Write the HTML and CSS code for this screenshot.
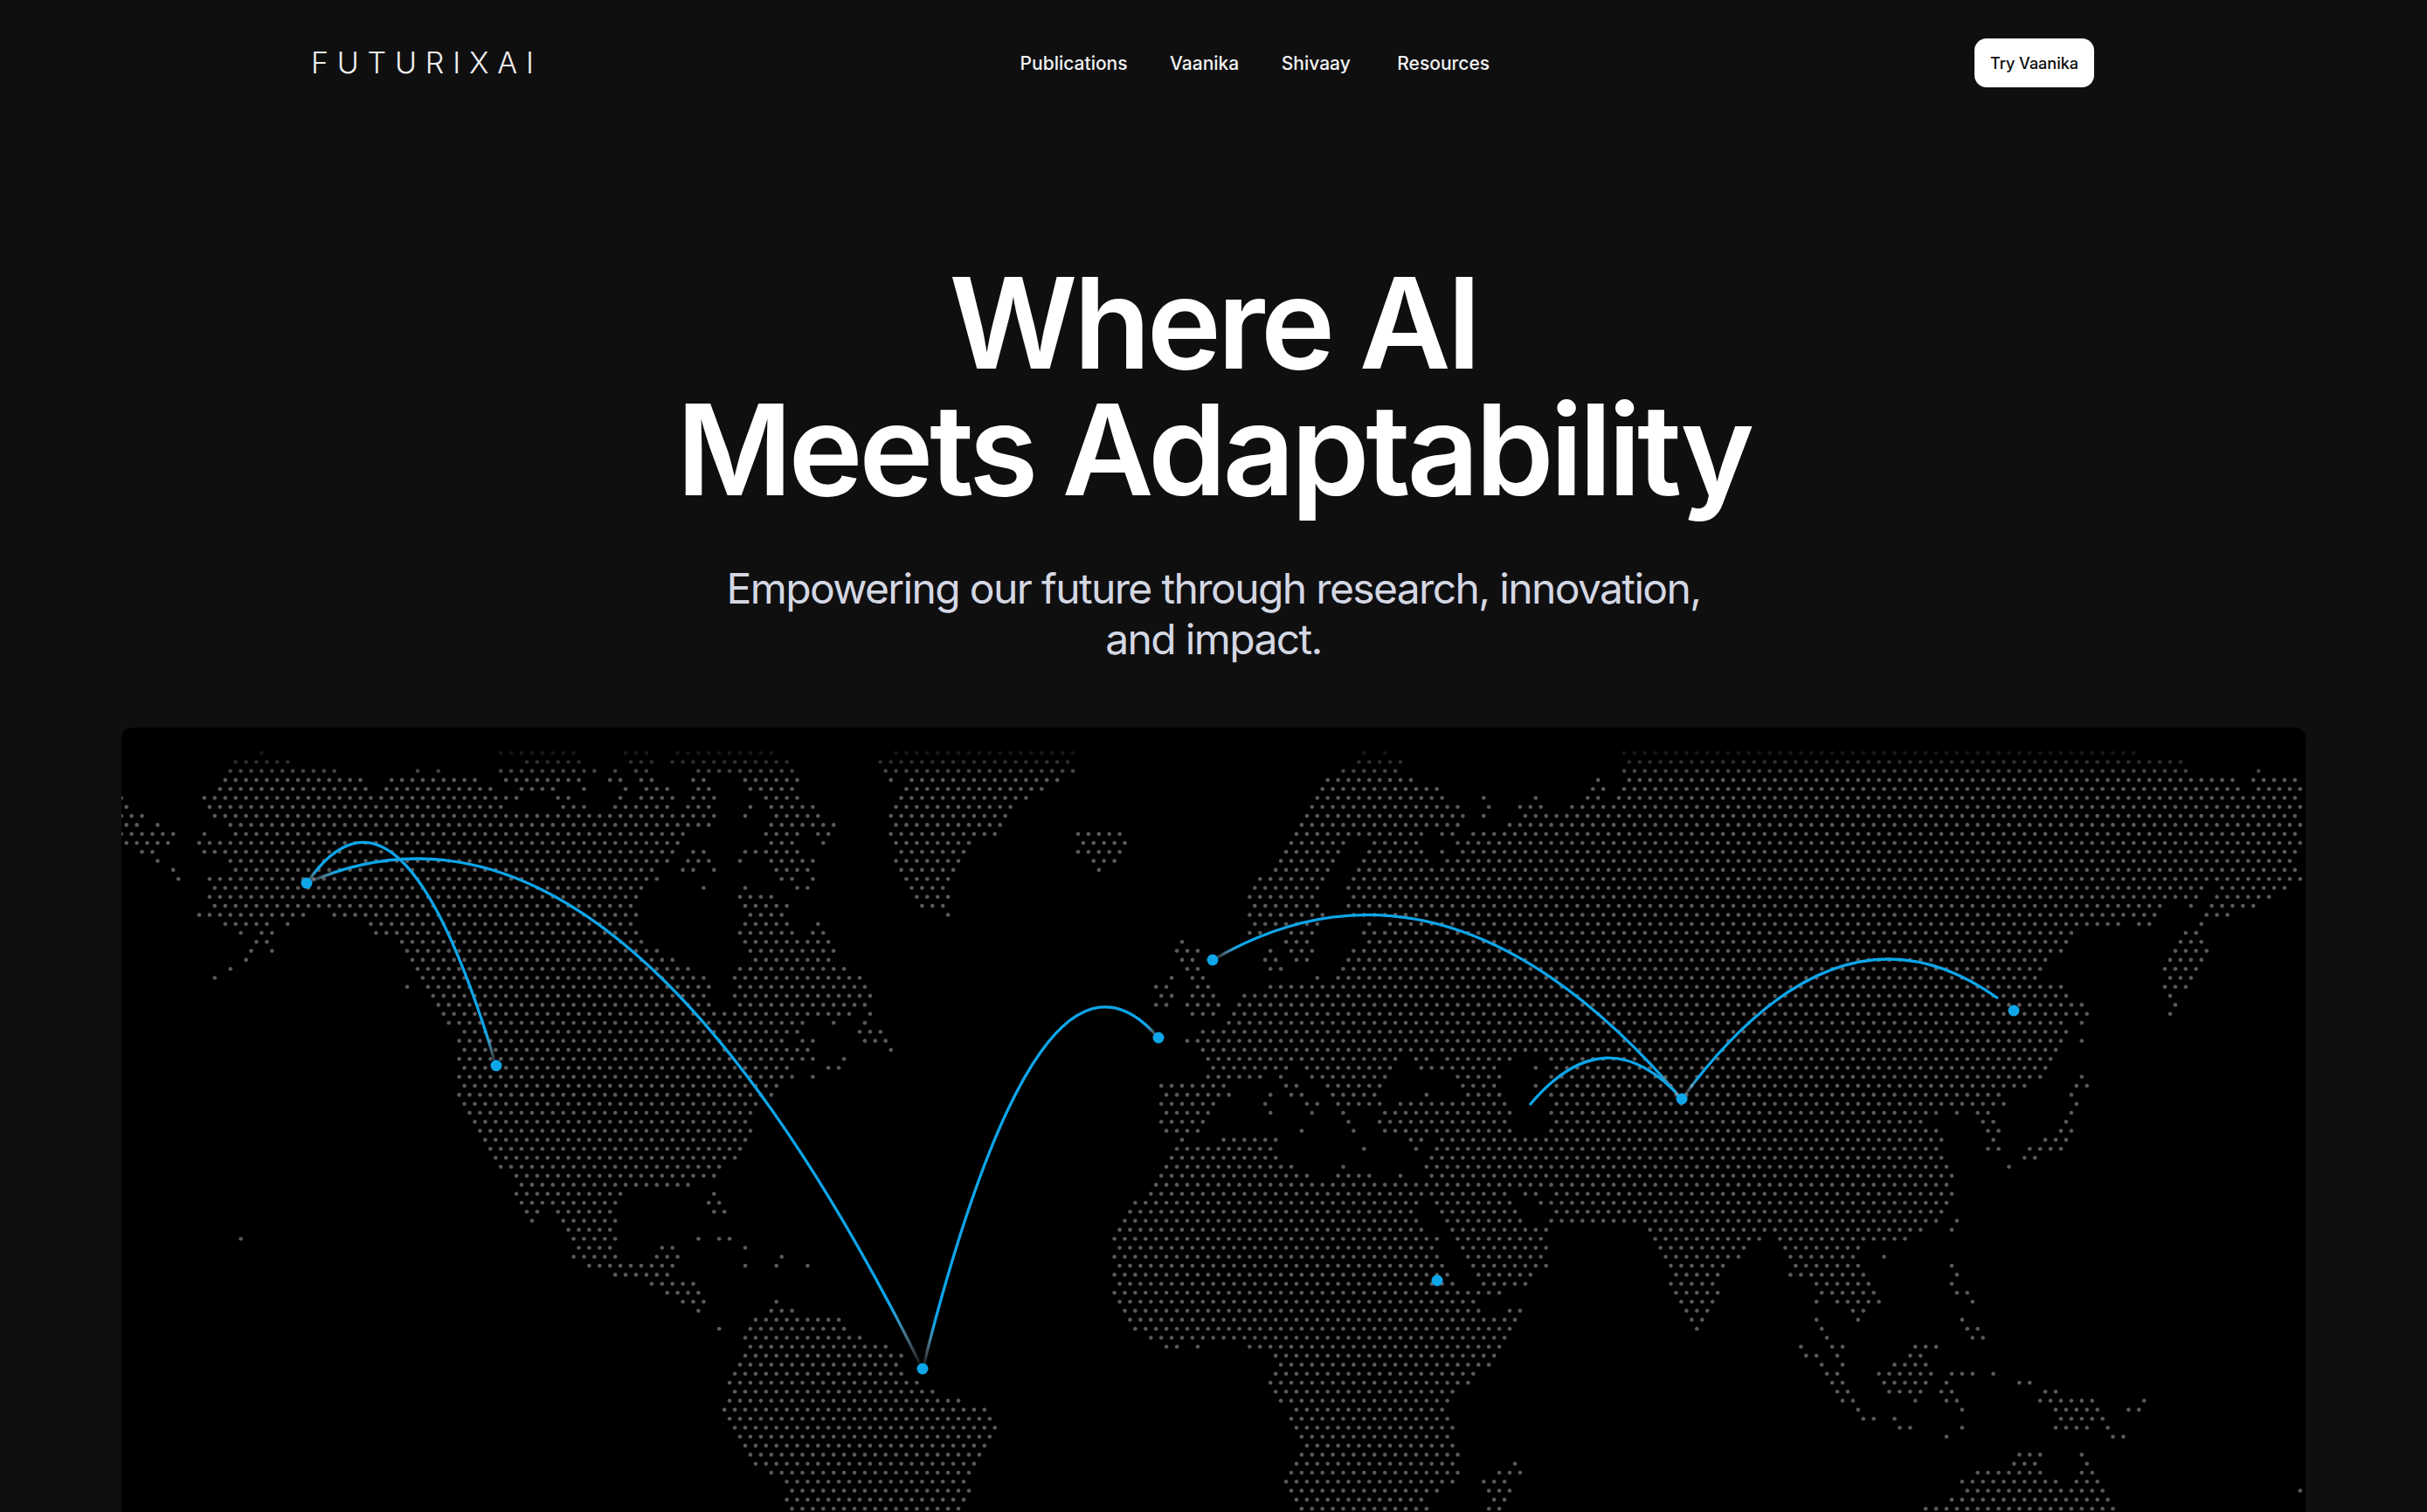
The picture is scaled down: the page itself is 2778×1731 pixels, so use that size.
FILE: index.html
```html
<!DOCTYPE html>
<html lang="en">
<head>
    <meta charset="UTF-8">
    <meta name="viewport" content="width=device-width, initial-scale=1.0">
    <title>FuturixAI</title>
    <link rel="stylesheet" href="styles.css">
</head>
<body>
    <div class="page">
        <header class="site-header">
            <a class="logo" href="#">FUTURIXAI</a>
            <nav class="main-nav">
                <a href="#">Publications</a>
                <a href="#">Vaanika</a>
                <a href="#">Shivaay</a>
                <a class="nav-last" href="#">Resources</a>
            </nav>
            <a class="try-button" href="#">Try Vaanika</a>
        </header>

        <section class="hero">
            <h1>Where AI<br>Meets Adaptability</h1>
            <p>Empowering our future through research, innovation,<br>and impact.</p>
        </section>

        <div class="world-map">
            <svg id="map-dots" class="map-dots" viewBox="139 833 2500 1250"></svg>
            <!-- viewBox is in page pixels, so the arcs read the same as the markers -->
            <svg class="map-arcs" viewBox="139 833 2500 1250" fill="none">
                <defs>
                    <linearGradient id="fade-both" x1="0" y1="0" x2="1" y2="0">
                        <stop offset="0" stop-color="#fff" stop-opacity="0"></stop>
                        <stop offset="0.05" stop-color="#0ea5e9"></stop>
                        <stop offset="0.95" stop-color="#0ea5e9"></stop>
                        <stop offset="1" stop-color="#fff" stop-opacity="0"></stop>
                    </linearGradient>
                    <linearGradient id="fade-left" x1="0" y1="0" x2="1" y2="0">
                        <stop offset="0" stop-color="#fff" stop-opacity="0"></stop>
                        <stop offset="0.05" stop-color="#0ea5e9"></stop>
                    </linearGradient>
                    <linearGradient id="fade-right" x1="0" y1="0" x2="1" y2="0">
                        <stop offset="0.95" stop-color="#0ea5e9"></stop>
                        <stop offset="1" stop-color="#fff" stop-opacity="0"></stop>
                    </linearGradient>
                </defs>
                <path class="arc" stroke="url(#fade-both)" d="M351 1011 Q459 855 568 1220"></path>
                <path class="arc" stroke="url(#fade-both)" d="M351 1011 Q703 855 1056 1567"></path>
                <path class="arc" stroke="url(#fade-both)" d="M1056 1567 Q1191 1032 1326 1188"></path>
                <path class="arc" stroke="url(#fade-both)" d="M1388 1099 Q1656 943 1925 1258"></path>
                <path class="arc" stroke="url(#fade-right)" d="M1925 1258 Q1838 1161 1751 1265"></path>
                <path class="arc" stroke="url(#fade-left)" d="M1925 1258 Q2106 1013 2287 1143"></path>
                <g class="markers">
                    <circle cx="351" cy="1011" r="6.5"></circle>
                    <circle cx="568" cy="1220" r="6.5"></circle>
                    <circle cx="1056" cy="1567" r="6.5"></circle>
                    <circle cx="1326" cy="1188" r="6.5"></circle>
                    <circle cx="1388" cy="1099" r="6.5"></circle>
                    <circle cx="1925" cy="1258" r="6.5"></circle>
                    <circle cx="1645" cy="1466" r="6.5"></circle>
                    <circle cx="2305" cy="1157" r="6.5"></circle>
                </g>
            </svg>
        </div>
    </div>
    <script src="map.js"></script>
</body>
</html>
```

FILE: styles.css
```css
html, body {
    margin: 0;
    height: 100%;
    background-color: #0f0f10;
}

body {
    font-family: 'Inter', 'Liberation Sans', sans-serif;
    color: #ffffff;
}

a {
    color: inherit;
    text-decoration: none;
}

.page {
    height: 100vh;
    overflow: hidden;
}

.site-header {
    display: flex;
    align-items: center;
    justify-content: space-between;
    padding: 44px 381px 0 356px;
}

.logo {
    font-size: 34px;
    font-weight: 300;
    letter-spacing: 9.8px;
    line-height: 56px;
    color: #f0f0f0;
}

.main-nav {
    display: flex;
    gap: 48.5px;
    margin-right: 8px;
    padding-top: 1px;
    font-size: 21px;
    font-weight: 500;
    color: #f2f2f2;
}

.nav-last {
    margin-left: 5px;
}

.try-button {
    display: flex;
    align-items: center;
    justify-content: center;
    width: 137px;
    height: 56px;
    border-radius: 14px;
    background-color: #ffffff;
    color: #0a0a0a;
    font-size: 18px;
    font-weight: 500;
}

.hero {
    text-align: center;
}

.hero h1 {
    margin: 197px 0 0;
    font-size: 144px;
    font-weight: 600;
    line-height: 145px;
    letter-spacing: -4.4px;
}

.hero p {
    margin: 58px 0 0;
    font-size: 48px;
    line-height: 58px;
    letter-spacing: -1.64px;
    color: #d4d7e3;
}

.world-map {
    position: relative;
    width: 2500px;
    height: 1250px;
    margin: 72px auto 0;
    border-radius: 12px;
    overflow: hidden;
    background-color: #000000;
}

.map-dots {
    display: block;
    width: 100%;
    height: 100%;
    fill: #5a5a5a;
    -webkit-mask-image: linear-gradient(to bottom, transparent 18px, #000 60px);
    mask-image: linear-gradient(to bottom, transparent 18px, #000 60px);
}

.map-arcs {
    position: absolute;
    top: 0;
    left: 0;
    width: 100%;
    height: 100%;
}

.arc {
    stroke-width: 3.3;
}

.markers {
    fill: #0ea5e9;
}
```

FILE: map.js
```js
// Dotted world map. Staggered grid; rows are read off the design at 3x,
// where there is a lot of coast. The rest is rough polygons.
const STEP_X = 11.905;
const STEP_Y = 10.3;
const FIRST_Y = 862;
const ROW_COUNT = 85;

// x/y is the corner of the crop, first is the first grid row it holds.
// Each row lists dot runs in crop pixels (3x).
const crops = [
    { x: 130, left: 130, right: 620, first: 0, rows: [
        '510 1330-1500', '420-600 1420-1490', '401-760 1045 1117 1330-1490', '383-850 955-1240 1345-1490',
        '365-865 937-1295 1400-1490', '28 312-1385', '45 330-1330 1472', '28-98 348-1490',
        '45-80 152 401-1490', '28-205 312 419-1490', '45-187 295-1490', '98-134 312-1490',
        '152 401-1490', '205 419-1490', '223 330-1490', '348-1490',
        '330-1490', '348-1490', '295-652 760-1490', '383-527 598 883-1490',
        '437 509-545 902-1490', '491-527 990-1490', '473 545 1008-1490', '455 1025-1490',
        '402 1043-1490', '348 1060-1490'
    ] },
    { x: 620, left: 620, right: 1140, first: 0, rows: [
        '0-110 290-360 465-790 1215-1560', '0-130 305-380 450-845 1160-1560', '0-180 250 325-360 540-865 1180-1560',
        '0-130 235-270 345-380 520-555 700-880 1200 1270-1560', '0-40 145 290 360-430 540-575 717-860 1252-1560',
        '55-90 270 345-450 520-595 770-880 1235-1560', '75-145 253-430 503-575 717 790-932 1217-1560',
        '0-595 700 807-950 1197-1560', '0-575 790-1003 1217-1560', '0-485 770-880 950-985 1197-1560',
        '0-470 790-860 968 1217-1468', '0-450 520-557 700-880 1235-1450', '0-432 503-575 682 790-932 1217-1432',
        '0-378 485-520 593 807-915 1235-1415', '0-397 825-860 932 1253-1397', '0-343 557 700 878-915 1270-1380',
        '0-325 682-790 1288-1397', '0-307 700-843 1307-1380', '0-325 717-825 1397', '0-307 700-843 950',
        '0-325 682-860 932-968', '0-343 700-985', '0-397 717-1003', '0-450 735-985', '0-503 682-1040',
        '0-557 664-1092', '0-575 682-1110', '0-557 664-1128', '0-575 682-1110', '0-1060 1128',
        '0-897 1003 1110', '0-878 1092-1163', '0-825 897-932 1110-1182', '0-915 1200', '0-932 1040',
        '0-860 985-1020', '0-860 932', '0-810'
    ] },
    { x: 1250, left: 1250, right: 1770, first: 0, rows: [
        '934 1006', '916-1060', '862-1042', '810-1095', '790-1185', '775-1205 1345 1525',
        '755-1260 1365 1470-1560', '738-1280 1345 1480-1560', '720-1260 1430-1560',
        '25-95 700-1135 1200-1240 1310-1560', '8-113 685-865 970-1115 1255-1560',
        '25-95 665-850 950-1135 1200 1270-1560', '8-78 650-830 935-1150 1220-1560', '25 630-810 915-1560',
        '575-795 898-1560', '560-775 880-1560', '540-760 898-1560', '560-775 880-1560', '540-790 900-1560',
        '560-775 950 1025-1560', '540-575 685-755 935-1560', '310 667-740 950-1560',
        '292-363 613 685-755 900-1560', '310-345 595-630 703-738 880-1560', '327-363 613-650 860-1560',
        '275 345-380 775 845-1560', '220-255 362-400 613-1560', '238-275 345-418 525-1560',
        '220-255 327-435 505-1560', '345-418 487-1560', '470-1560', '380-1560', '327-1560', '380-1560',
        '400-1040 1115-1150 1220-1435 1530', '418-670 740-1025 1130-1385 1525',
        '400-580 650 755-1005 1255-1400 1530', '238-455 667-705 810-990 1275-1385 1525',
        '255-470 613 685-720 828-970 1150 1290-1400', '238-418 595 740-775 845-990 1060-1420',
        '255-400 613 755 863 1005-1435', '238-380 880 990-1420', '255-365 720 898 1005-1435'
    ] },
    { x: 1250, left: 1250, right: 1770, first: 43, rows: [
        '310 450-630 1095-1130 1200-1560', '290-615 935 1115 1185-1560', '275-630 1165-1560',
        '255-685 863 1150-1560', '238-740 845-955 1060 1165-1560', '220-1560', '202-1420 1490-1525',
        '150-1115 1165-1435 1540', '130-1095 1200-1455', '113-1115 1220-1475', '95-1130 1238-1490 1525-1560',
        '77-1185 1255-1560', '95-1165 1275-1560', '77-1185 1292-1560', '95-1203 1310-1560',
        '77-1220 1328-1508', '95-1238 1345-1490', '77-1400', '95-1310', '113-1328 1435-1470',
        '130-1455', '150-1435', '202-1420', '255-290 363 540-1400', '630-1382', '650-1365', '630-1310',
        '613-1292', '630-1238', '650-1220', '703-1203', '685-1220', '703-1238', '720-1220', '738-1238',
        '720-1255', '703-1238 1452', '685-1255 1400-1470', '667-1238 1345-1417', '685-1185 1363-1435',
        '703-1130 1380-1417', '720-1150 1363-1400'
    ] },
    { x: 2125, left: 2125, right: 2645, first: 0, rows: [
        '0-955', '0-1115', '0-1132 1380', '0-1295 1365-1508', '0-1310 1380-1525', '0-1510', '0-1525', '0-1508',
        '0-1525', '0-1508', '0-1525', '0-1508', '0-1490', '0-1508', '0-1525', '0-1185 1255-1470',
        '0-1170 1238-1418', '0-1045 1150 1220-1365', '0-1025 1203-1275', '0-900 970-1005 1185',
        '0-740 1132-1167', '0-720 1113-1185', '0-703 1095-1203', '0-650 1078-1185', '0-632 1060-1167',
        '0-615 1078-1150', '0-705 1060-1132', '0-720 1078', '0-775 1095', '0-790 1078', '0-705 775',
        '0-720', '0-705 775', '0-685', '0-667'
    ] },
    { x: 2000, left: 2000, right: 2520, first: 35, rows: [
        '0-1025', '0-1005 1150', '0-955 1130-1167', '0-865 1113', '0-880 1130', '0-650 720 790-828 1113',
        '0-597 810-845 1095', '0-650 828-863 1078-1113', '0-667 845 1025-1095', '0-650 828-863 970-1078',
        '0-667 952-988', '0-685 898', '0-703', '0-685', '0-703', '0-685', '0-667', '0-650 720', '0-597 703',
        '0-40 113-542', '130-380', '150-363 470', '167-380 703', '150-400 720', '238-417 703', '255-435 720-756',
        '238 310-452 774', '363-400', '238 380 738', '256 756-792', '274 774-810', '185 292-328 577-650',
        '202-238 310 560-597', '256 328 506-613', '274-310 452-632 703-774 845', '292-328 470-613 685 935-970',
        '310-345 488-597 667-703 1025-1060', '328-363 577 685-720 1007-1185 1363', '380 738 1060-1203 1310-1345',
        '400-435 506 1078-1220', '524-560 738 1060-1167 1238', '685 1256-1292', '', '935-1007 1150',
        '917-988 1167', '792-1007 1150-1185', '738-1060 1130-1203', '756-1220', '703-1238', '613-1256'
    ] }
];

// wider crops of the left and right half, squashed: 1px there is 0.829 x 0.581 on the page
const westShapes = [
    // lower North America, Mexico
    [[470,735],[925,735],[890,770],[880,830],[860,870],[830,910],[800,925],[720,935],[695,960],[695,1070],[745,1075],[750,1045],[785,1045],[770,1100],[815,1120],[815,1155],[822,1195],[800,1170],[765,1140],[740,1122],[690,1105],[635,1070],[630,1025],[590,960],[590,1000],[575,1000],[560,955],[545,905],[530,885],[505,850],[490,800]],
    // Florida
    [[815,930],[830,930],[848,985],[820,985]],
    // South America
    [[915,1150],[945,1175],[1005,1190],[1030,1220],[1085,1245],[1095,1300],[1130,1330],[1180,1350],[1225,1380],[1215,1420],[1190,1470],[1185,1530],[1170,1580],[935,1580],[920,1510],[885,1480],[860,1420],[840,1370],[850,1310],[865,1260],[865,1205],[890,1180]],
    // rest of the west coast, between the crops
    [[425,515],[440,550],[450,585],[470,620],[475,690],[475,745],[592,745],[592,515]],
    // Greenland, Iceland edges
    [[1218,66],[1325,66],[1325,110],[1300,140],[1240,175],[1225,225],[1218,235]],
    [[1325,228],[1350,228],[1350,280],[1325,265]]
];

const eastShapes = [
    // Asia between the crops, down to India
    [[447,190],[500,170],[505,120],[525,120],[530,170],[550,140],[550,66],[890,66],[890,1040],[745,1025],[695,1090],[662,1225],[640,1190],[625,1150],[600,1060],[575,1010],[480,1010],[447,1000]]
];

// odd lone dots, page pixels
const lone = [
    [276,1418], [466,1130], [800,1417], [818,1417], [835,1417], [853,1429], [853,1449], [889,1439], [889,1449],
    [924,1449], [822,1522], [2633,1706]
];

function toPage(shape, ox) {
    return shape.map(([x, y]) => [ox + x * 0.829, 820 + y * 0.581]);
}

const shapes = [
    ...westShapes.map(s => toPage(s, 130)),
    ...eastShapes.map(s => toPage(s, 1400))
];

function parseRow(row) {
    return row.split(' ').filter(Boolean).map(run => {
        const [a, b] = run.split('-').map(Number);
        return [a, b === undefined ? a : b];
    });
}

crops.forEach(crop => {
    crop.runs = crop.rows.map(parseRow);
});

function insideShape(x, y, shape) {
    let inside = false;
    for (let i = 0, j = shape.length - 1; i < shape.length; j = i++) {
        const [xi, yi] = shape[i];
        const [xj, yj] = shape[j];
        if ((yi > y) !== (yj > y) && x < (xj - xi) * (y - yi) / (yj - yi) + xi) {
            inside = !inside;
        }
    }
    return inside;
}

function isLand(x, y, row) {
    if (lone.some(([lx, ly]) => Math.abs(lx - x) < 6 && Math.abs(ly - y) < 5.2)) {
        return true;
    }
    const crop = crops.find(c => x >= c.left && x < c.right && row >= c.first && row < c.first + c.runs.length);
    if (crop) {
        const cx = (x - crop.x) * 3;
        return crop.runs[row - crop.first].some(([a, b]) => cx >= a - 9 && cx <= b + 9);
    }
    return shapes.some(shape => insideShape(x, y, shape));
}

let dots = '';
for (let row = 0; row < ROW_COUNT; row++) {
    const y = FIRST_Y + row * STEP_Y;
    const startX = row % 2 === 0 ? 144.65 : 138.7;
    for (let x = startX; x < 2640; x += STEP_X) {
        if (isLand(x, y, row)) {
            dots += `<circle cx="${x.toFixed(1)}" cy="${y.toFixed(1)}" r="2.3"></circle>`;
        }
    }
}
document.getElementById('map-dots').innerHTML = dots;
```
